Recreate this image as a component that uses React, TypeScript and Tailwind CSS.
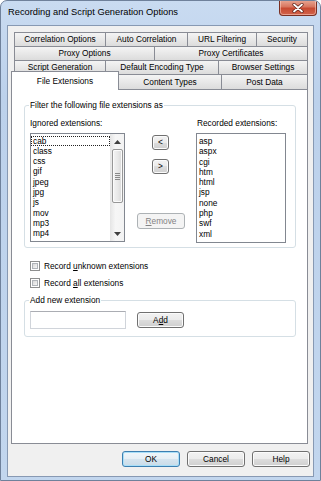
import React from "react";

const btn =
  "rounded-[3px] border border-[#707070] bg-[linear-gradient(to_bottom,#f2f2f2_0%,#ebebeb_50%,#dddddd_50%,#cfcfcf_100%)] shadow-[inset_0_0_0_1px_#fbfbfb] flex items-center justify-center text-[8.3px] leading-none";

const tab =
  "h-[14px] border-t border-l border-[#898c95] bg-[linear-gradient(to_bottom,#f4f4f4,#dcdcdc)] flex items-center justify-center text-[8.3px] leading-none whitespace-nowrap";

const ignored = ["cab", "class", "css", "gif", "jpeg", "jpg", "js", "mov", "mp3", "mp4"];
const recorded = ["asp", "aspx", "cgi", "htm", "html", "jsp", "none", "php", "swf", "xml"];

function Arrow({ up }: { up?: boolean }) {
  return (
    <svg width="7" height="4" viewBox="0 0 7 4">
      {up ? <path d="M0 4 L3.5 0 L7 4 Z" fill="#404040" /> : <path d="M0 0 L3.5 4 L7 0 Z" fill="#404040" />}
    </svg>
  );
}

function Checkbox({ children }: { children: React.ReactNode }) {
  return (
    <div className="flex items-center h-[10px]">
      <div className="w-[10px] h-[10px] border border-[#8e8f8f] bg-white p-px">
        <div className="w-full h-full border border-[#b0b4b9] bg-[linear-gradient(135deg,#d8d8d8,#f6f6f6)]" />
      </div>
      <span className="ml-[4px] text-[8.3px] leading-[10px]">{children}</span>
    </div>
  );
}

export default function App() {
  return (
    <div className="w-[321px] h-[481px] flex flex-col border border-[#6f819b] rounded-t-[7px] bg-[linear-gradient(to_bottom,#c9dbf1,#bcd1eb_20%,#c2d6ee)] font-['Liberation_Sans',Arial,sans-serif] text-black overflow-hidden">
      {/* Title bar */}
      <div className="h-[24px] flex justify-between pl-[7px] pr-[3px] shrink-0">
        <div className="text-[9.3px] leading-[22px] whitespace-nowrap">Recording and Script Generation Options</div>
        <div className="w-[38px] h-[16px] -mt-px rounded-b-[4px] border border-[#7a2f22] border-t-0 bg-[linear-gradient(to_bottom,#e9a996,#d8765f_45%,#c74a32_55%,#d2634a)] shadow-[inset_0_0_0_1px_rgba(255,220,210,0.5)] flex items-center justify-center">
          <svg width="12" height="10" viewBox="0 0 12 10">
            <path d="M2 1.5 L10 8.5 M10 1.5 L2 8.5" stroke="#5a1e14" strokeWidth="3.2" strokeLinecap="round" />
            <path d="M2 1.5 L10 8.5 M10 1.5 L2 8.5" stroke="#ffffff" strokeWidth="1.8" strokeLinecap="round" />
          </svg>
        </div>
      </div>

      {/* Client */}
      <div className="flex-1 mx-[6px] mb-[3px] border border-[#8799b3] bg-[#f0f0f0] flex flex-col">
        <div className="pt-[6px] pl-[3px]">
          <div className="w-[297px]">
            {/* Row 1 */}
            <div className="ml-[3px] w-[294px] flex">
              <div className={`${tab} w-[91px]`}>Correlation Options</div>
              <div className={`${tab} w-[82px]`}>Auto Correlation</div>
              <div className={`${tab} w-[69px]`}>URL Filtering</div>
              <div className={`${tab} flex-1 border-r`}>Security</div>
            </div>
            {/* Row 2 */}
            <div className="ml-[3px] w-[294px] flex">
              <div className={`${tab} w-[140px]`}>Proxy Options</div>
              <div className={`${tab} flex-1 border-r`}>Proxy Certificates</div>
            </div>
            {/* Row 3 */}
            <div className="ml-[3px] w-[294px] flex">
              <div className={`${tab} w-[91px]`}>Script Generation</div>
              <div className={`${tab} w-[113px]`}>Default Encoding Type</div>
              <div className={`${tab} flex-1 border-r`}>Browser Settings</div>
            </div>
            {/* Row 4 */}
            <div className="ml-[3px] w-[294px] h-[15px] flex items-start">
              <div className="relative z-10 -ml-[3px] -mt-[3px] w-[108px] h-[19px] border-t border-l border-r border-[#898c95] bg-white flex justify-center pt-[4px] text-[8.3px] leading-[10px] whitespace-nowrap">
                File Extensions
              </div>
              <div className={`${tab} h-[15px] w-[102px] border-l-0 pt-px`}>Content Types</div>
              <div className={`${tab} h-[15px] flex-1 border-r pt-px`}>Post Data</div>
            </div>

            {/* Panel */}
            <div className="w-[297px] h-[355px] border border-[#898c95] bg-white text-[8.3px] leading-[10px]">
              {/* Group 1 */}
              <div className="ml-[12px] mt-[15px] w-[272px] border border-[#d5dfe5] rounded-[3px] pb-[4px]">
                <div className="-mt-[6px] ml-[4px] w-fit bg-white px-[1px] leading-[10px] whitespace-nowrap">
                  Filter the following file extensions as
                </div>
                <div className="mt-[8px] pl-[5px] flex">
                  {/* Left */}
                  <div className="w-[95px]">
                    <div className="h-[10px] whitespace-nowrap">Ignored extensions:</div>
                    <div className="mt-[5px] h-[109px] border border-[#828790] bg-white flex">
                      <div className="flex-1 pt-[1.5px]">
                        {ignored.map((s, i) => (
                          <div
                            key={s}
                            className={`h-[10.3px] leading-[10.3px] pl-[2px] ${i === 0 ? "outline outline-1 outline-dotted outline-[#222] -outline-offset-1" : ""}`}
                          >
                            {s}
                          </div>
                        ))}
                      </div>
                      <div className="w-[14px] border-l border-[#e6e6e6] bg-[linear-gradient(to_right,#e8e8e8,#f6f6f6_35%,#f3f3f3)] flex flex-col items-center">
                        <div className="h-[15px] flex items-center justify-center">
                          <Arrow up />
                        </div>
                        <div className="w-[11px] h-[54px] rounded-[2px] border border-[#979797] bg-[linear-gradient(to_right,#f4f4f4,#e9e9e9_50%,#d9d9d9)] shadow-[inset_0_0_0_1px_#fbfbfb] flex flex-col items-center justify-center gap-[1px]">
                          <div className="w-[5px] h-px bg-[#8a8a8a]" />
                          <div className="w-[5px] h-px bg-[#8a8a8a]" />
                          <div className="w-[5px] h-px bg-[#8a8a8a]" />
                          <div className="w-[5px] h-px bg-[#8a8a8a]" />
                        </div>
                        <div className="flex-1" />
                        <div className="h-[15px] flex items-center justify-center">
                          <Arrow />
                        </div>
                      </div>
                    </div>
                  </div>
                  {/* Middle */}
                  <div className="w-[71px] flex flex-col">
                    <div className={`${btn} mt-[17px] ml-[27px] w-[17px] h-[15px]`}>&lt;</div>
                    <div className={`${btn} mt-[9px] ml-[27px] w-[17px] h-[15px]`}>&gt;</div>
                    <div className="mt-[39px] ml-[12px] w-[48px] h-[16px] rounded-[3px] border border-[#adb2b5] bg-[#f4f4f4] text-[#838383] flex items-center justify-center text-[8.3px] leading-none">
                      <span>
                        <span className="underline">R</span>emove
                      </span>
                    </div>
                  </div>
                  {/* Right */}
                  <div className="w-[90px]">
                    <div className="h-[10px] pl-[1px] whitespace-nowrap">Recorded extensions:</div>
                    <div className="mt-[5px] h-[110px] border border-[#828790] bg-white pt-[2px]">
                      {recorded.map((s) => (
                        <div key={s} className="h-[10.3px] leading-[10.3px] pl-[2px]">
                          {s}
                        </div>
                      ))}
                    </div>
                  </div>
                </div>
              </div>

              {/* Checkboxes */}
              <div className="ml-[18px] mt-[13px]">
                <Checkbox>
                  Record <span className="underline">u</span>nknown extensions
                </Checkbox>
              </div>
              <div className="ml-[18px] mt-[7px]">
                <Checkbox>
                  Record <span className="underline">a</span>ll extensions
                </Checkbox>
              </div>

              {/* Group 2 */}
              <div className="ml-[12px] mt-[12px] w-[272px] border border-[#d5dfe5] rounded-[3px] pb-[7px]">
                <div className="-mt-[6px] ml-[4px] w-fit bg-white px-[1px] leading-[10px] whitespace-nowrap">
                  Add new extension
                </div>
                <div className="mt-[6px] pl-[5px] flex items-center">
                  <div className="w-[96px] h-[18px] border border-[#d0d4da] border-t-[#abadb3] bg-white" />
                  <div className={`${btn} ml-[11px] w-[47px] h-[16px]`}>
                    <span>
                      A<span className="underline">d</span>d
                    </span>
                  </div>
                </div>
              </div>
            </div>
          </div>
        </div>

        {/* Bottom buttons */}
        <div className="mt-[7px] pr-[3px] flex justify-end gap-[7px]">
          <div className="w-[58px] h-[16px] rounded-[3px] border border-[#3c7fb1] bg-[linear-gradient(to_bottom,#f0f6fa_0%,#e6eff5_50%,#d6e5ef_50%,#c9dbe8_100%)] shadow-[inset_0_0_0_1px_#a9dff8] flex items-center justify-center text-[8.3px] leading-none">
            OK
          </div>
          <div className={`${btn} w-[58px] h-[16px]`}>Cancel</div>
          <div className={`${btn} w-[58px] h-[16px]`}>Help</div>
        </div>
      </div>
    </div>
  );
}
